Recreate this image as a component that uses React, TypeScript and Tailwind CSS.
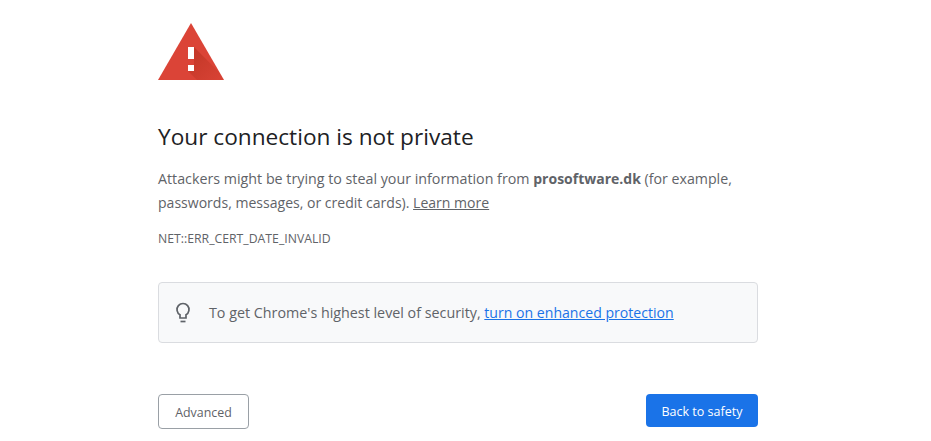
export default function App() {
  return (
    <div className="w-[931px] h-[441px] overflow-hidden bg-white font-['Open_Sans',sans-serif]">
      <div className="ml-[158px] w-[600px] pt-[23px] flex flex-col">
        <svg width="66" height="57" viewBox="0 0 66 57" className="block">
          <defs>
            <linearGradient id="warningShadow" x1="30" y1="30" x2="58" y2="58" gradientUnits="userSpaceOnUse">
              <stop offset="0" stopColor="#A52714" stopOpacity="0.45" />
              <stop offset="1" stopColor="#A52714" stopOpacity="0.08" />
            </linearGradient>
          </defs>
          <path d="M33 0 L66 57 L0 57 Z" fill="#DB4437" />
          <path d="M36 24 L61.900 49.900 L66 57 L39 57 L30 48 L36 42 Z" fill="url(#warningShadow)" />
          <rect x="30" y="24" width="6" height="12" fill="#fff" />
          <rect x="30" y="42" width="6" height="6" fill="#fff" />
        </svg>
        <h1 className="mt-[41px] text-[22.65px] leading-[32px] font-normal text-[#202124]">Your connection is not private</h1>
        <p className="mt-[14px] text-[14.05px] leading-[24px] text-[#5f6368]">
          <span className="text-[14.28px]">Attackers might be trying to steal your information from </span><b className="font-bold text-[14px]">prosoftware.dk</b> <span className="text-[14.2px]">(for example,</span> passwords, messages, or credit cards). <a className="underline">Learn more</a>
        </p>
        <div className="mt-[16px] text-[12.25px] leading-[16px] text-[#5f6368]">NET::ERR_CERT_DATE_INVALID</div>
        <div className="mt-[35px] h-[61px] border border-[#dadce0] rounded-[4px] bg-[#f8f9fa] flex items-center pl-[15px] text-[14.3px] text-[#5f6368]">
          <svg width="18" height="22" viewBox="0 0 18 22" fill="none" stroke="#5f6368" strokeWidth="1.7" className="mr-[17px]">
            <path d="M6 12.700A6 6 0 1 1 12 12.700V16H6Z" />
            <path d="M6.500 19.500h5" />
          </svg>
          <span>To get Chrome's highest level of security, <a className="underline text-[14.1px] text-[#1a73e8]">turn on enhanced protection</a></span>
        </div>
        <div className="mt-[51px] flex justify-between items-start">
          <button className="w-[91px] h-[35px] border border-[#9aa0a6] rounded-[4px] pt-[3px] text-[12.4px] text-[#5f6368] bg-white">Advanced</button>
          <button className="w-[112px] h-[33px] rounded-[4px] pt-[3px] text-[12.5px] text-white bg-[#1a73e8]">Back to safety</button>
        </div>
      </div>
    </div>
  );
}
